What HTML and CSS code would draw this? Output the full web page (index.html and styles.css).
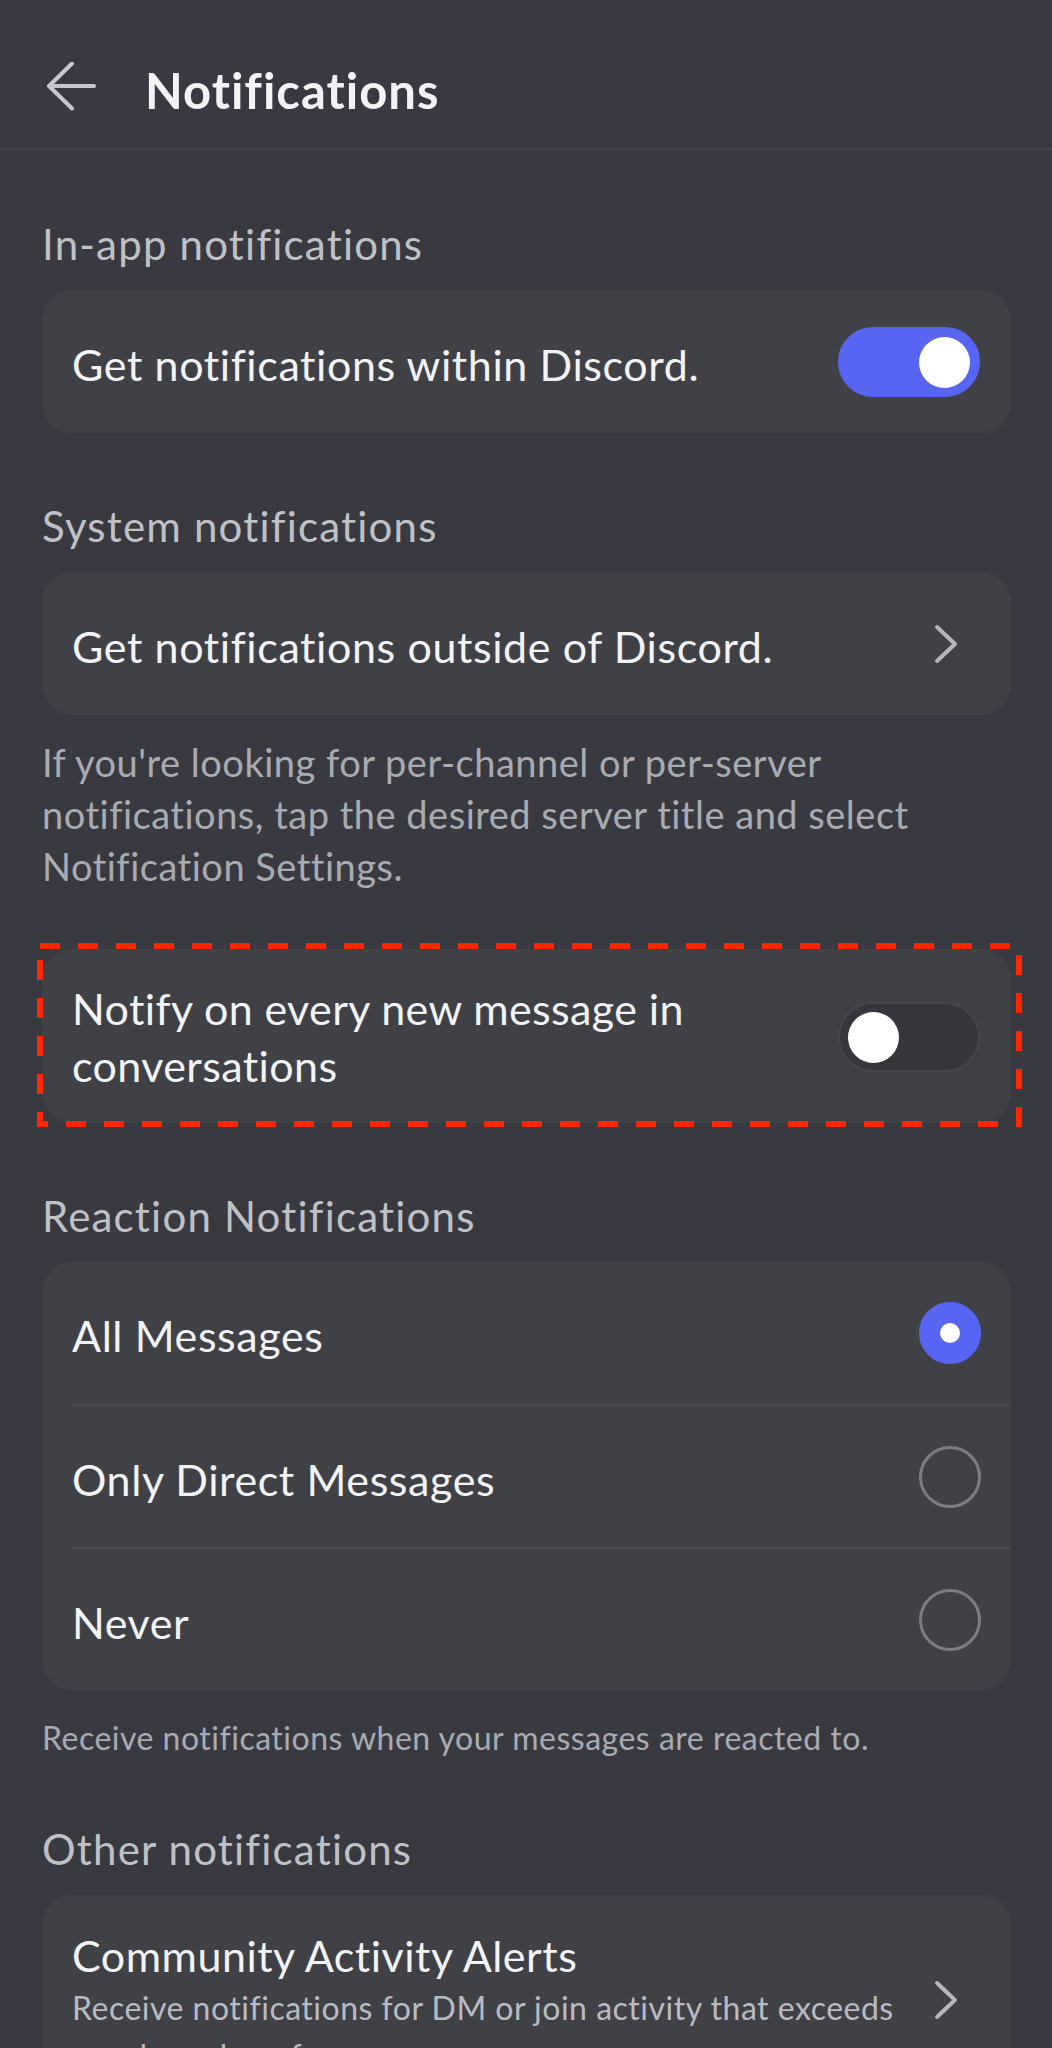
FILE: index.html
```html
<!DOCTYPE html>
<html lang="en">
  <head>
    <meta charset="UTF-8" />
    <meta name="viewport" content="width=device-width, initial-scale=1.0" />
    <title>Notifications</title>
    <link rel="stylesheet" href="styles.css">
  </head>
  <body>
    <header class="topbar">
      <button class="back" aria-label="Back">
        <svg width="50" height="50" viewBox="0 0 50 50">
          <path d="M3 24 H48 M3 24 L26 1.5 M3 24 L26 46.5" fill="none" stroke="currentColor" stroke-width="4" stroke-linecap="round" stroke-linejoin="round" />
        </svg>
      </button>
      <h1>Notifications</h1>
    </header>

    <main class="content">
      <section class="group">
        <h2 class="group-label">In-app notifications</h2>
        <div class="card row">
          <span class="row-text">Get notifications within Discord.</span>
          <span class="toggle on"><span class="knob"></span></span>
        </div>
      </section>

      <section class="group">
        <h2 class="group-label">System notifications</h2>
        <div class="card row">
          <span class="row-text">Get notifications outside of Discord.</span>
          <svg class="chevron" width="62" height="40" viewBox="0 0 62 40">
            <path d="M19 3 L37 20 L19 37" fill="none" stroke="currentColor" stroke-width="4" stroke-linecap="round" stroke-linejoin="round" />
          </svg>
        </div>
        <p class="hint">If you're looking for per-channel or per-server notifications, tap the desired server title and select Notification Settings.</p>
      </section>

      <div class="card row tall">
        <span class="row-text">Notify on every new message in conversations</span>
        <span class="toggle"><span class="knob"></span></span>
        <!-- annotation outline -->
        <svg class="outline" width="985" height="184" viewBox="0 0 985 184">
          <rect x="3" y="3" width="979" height="178" fill="none" stroke="#ff2600" stroke-width="6" stroke-dasharray="20 18" />
        </svg>
      </div>

      <section class="group">
        <h2 class="group-label">Reaction Notifications</h2>
        <div class="card options">
          <div class="option">
            <span class="row-text">All Messages</span>
            <span class="radio checked"></span>
          </div>
          <div class="option">
            <span class="row-text">Only Direct Messages</span>
            <span class="radio"></span>
          </div>
          <div class="option">
            <span class="row-text">Never</span>
            <span class="radio"></span>
          </div>
        </div>
        <p class="hint small">Receive notifications when your messages are reacted to.</p>
      </section>

      <section class="group last">
        <h2 class="group-label">Other notifications</h2>
        <div class="card row detail">
          <div class="detail-text">
            <span class="row-title">Community Activity Alerts</span>
            <span class="row-sub">Receive notifications for DM or join activity that exceeds usual numbers for your server.</span>
          </div>
          <svg class="chevron" width="62" height="40" viewBox="0 0 62 40">
            <path d="M19 3 L37 20 L19 37" fill="none" stroke="currentColor" stroke-width="4" stroke-linecap="round" stroke-linejoin="round" />
          </svg>
        </div>
      </section>
    </main>
  </body>
</html>
```

FILE: styles.css
```css
html,
body {
  height: 100%;
  overflow: hidden;
}

body {
  margin: 0;
  background-color: #393a41;
  color: #f2f3f5;
  font-family: Lato, "Noto Sans", sans-serif;
}

.topbar {
  display: flex;
  align-items: center;
  height: 116px;
  padding: 32px 0 0 46px;
  border-bottom: 2px solid #44454c;
}

.back {
  display: flex;
  padding: 0;
  margin: 0 49px 6px 0;
  background: none;
  border: none;
  color: #c6c8cd;
}

.topbar h1 {
  margin: 0;
  font-size: 49px;
  font-weight: 700;
  line-height: 1.2;
  letter-spacing: 1px;
}

.content {
  padding: 0 41px 0 42px;
}

.group {
  padding-top: 68px;
}

.group:first-child {
  padding-top: 69px;
}

.group.last {
  padding-top: 65px;
}

.group-label {
  margin: 0 0 21px;
  font-size: 42px;
  font-weight: 400;
  line-height: 50px;
  letter-spacing: 1.2px;
  color: #bfc1c7;
}

.card {
  background-color: #404147;
  border-radius: 30px;
}

.row {
  display: flex;
  align-items: center;
  justify-content: space-between;
  min-height: 143px;
  padding: 0 31px 0 30px;
  box-sizing: border-box;
}

.row-text {
  padding-top: 6px;
  font-size: 43px;
  line-height: 52px;
  letter-spacing: 0.6px;
}

.chevron {
  flex-shrink: 0;
  color: #b5b7bd;
}

.hint {
  margin: 21px 0 0;
  font-size: 38px;
  line-height: 52px;
  letter-spacing: 0.5px;
  color: #a9abb2;
}

.hint.small {
  margin-top: 27px;
  font-size: 32px;
  line-height: 42px;
  letter-spacing: 0.5px;
}

/* toggles */
.toggle {
  position: relative;
  flex-shrink: 0;
  width: 142px;
  height: 70px;
  box-sizing: border-box;
  border-radius: 35px;
  border: 2px solid #46474e;
  background-color: #36373c;
}

.toggle .knob {
  position: absolute;
  top: 8px;
  left: 8px;
  width: 51px;
  height: 51px;
  border-radius: 50%;
  background-color: #ffffff;
}

.toggle.on {
  border-color: #5865f2;
  background-color: #5865f2;
}

.toggle.on .knob {
  left: auto;
  right: 8px;
}

/* highlighted row */
.tall {
  position: relative;
  margin-top: 57px;
  min-height: 174px;
  padding-top: 31px;
  padding-bottom: 29px;
}

.tall .row-text {
  max-width: 700px;
  padding-top: 0;
  line-height: 57px;
  letter-spacing: 0.4px;
}

.outline {
  position: absolute;
  left: -5px;
  top: -6px;
  pointer-events: none;
}

/* radio list */
.options {
  overflow: hidden;
}

.option {
  display: flex;
  align-items: center;
  justify-content: space-between;
  height: 142px;
  margin-left: 30px;
  padding-right: 30px;
  box-sizing: border-box;
}

.option + .option {
  height: 143px;
  border-top: 2px solid #4a4b51;
}

.radio {
  flex-shrink: 0;
  width: 62px;
  height: 62px;
  box-sizing: border-box;
  border-radius: 50%;
  border: 3px solid #7b7d84;
}

.radio.checked {
  border: 21px solid #5865f2;
  background-color: #ffffff;
}

/* detail row */
.detail {
  padding-top: 35px;
  padding-bottom: 35px;
}

.detail .chevron {
  margin-bottom: 10px;
}

.detail-text {
  display: flex;
  flex-direction: column;
  min-width: 0;
}

.row-title {
  font-size: 43px;
  line-height: 52px;
  letter-spacing: 0.5px;
}

.row-sub {
  margin-top: 2px;
  max-width: 850px;
  font-size: 32px;
  line-height: 48px;
  letter-spacing: 0.5px;
  color: #b9bbc1;
}
```
